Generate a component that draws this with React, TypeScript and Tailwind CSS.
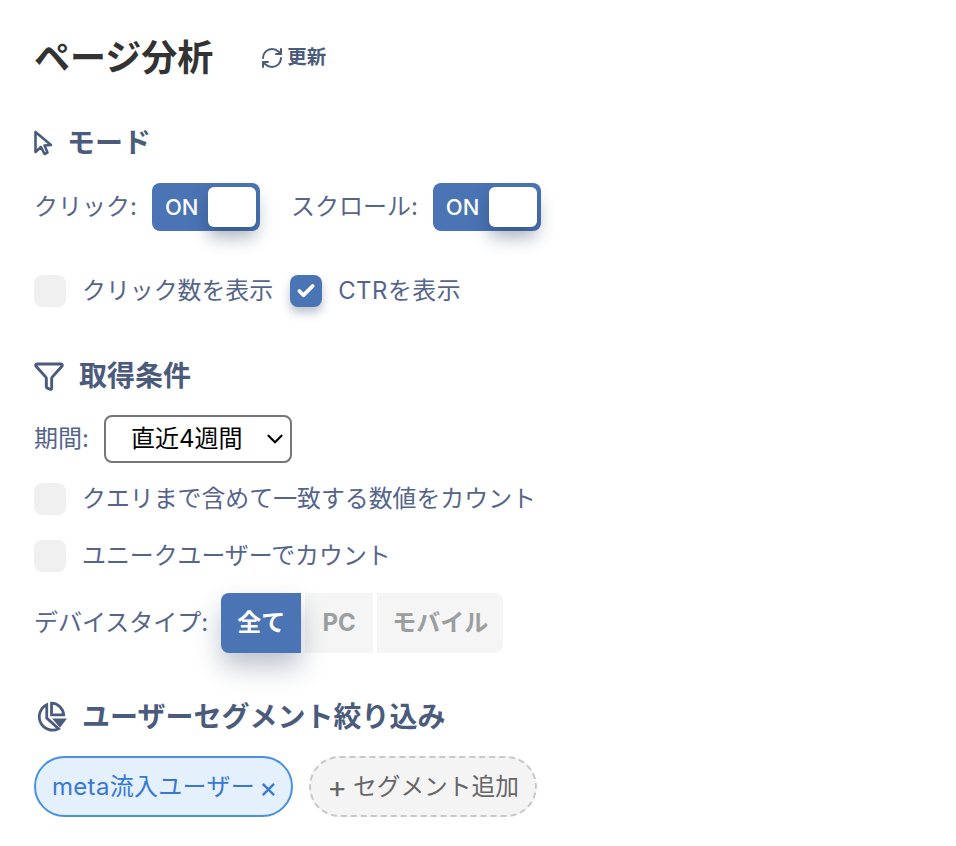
import { Check, ChevronDown, Funnel, RefreshCw } from "lucide-react";

const font = { fontFamily: 'Inter, "Noto Sans CJK JP", sans-serif' };

function CursorIcon() {
  return (
    <svg width="20" height="26" viewBox="0 0 20 26" fill="none" stroke="#4a5b7c" strokeWidth="2.6" strokeLinejoin="round">
      <path d="M1.5 2 L1.5 22 L7 17 L10.5 24 L13.5 22.5 L10.5 15.5 L17 15 Z" />
    </svg>
  );
}

function SegmentIcon() {
  return (
    <svg width="34" height="32" viewBox="0 0 32 30" fill="none" stroke="#4a5b7c" strokeWidth="2.6">
      <path d="M12 3.5 A12.5 12.5 0 1 0 23 26 L12 16 Z" />
      <path d="M16.5 2 A12 12 0 0 1 28 13 L16.5 13 Z" />
      <path d="M17 16.5 L31 16.5 L24.5 25 Z" fill="#4a5b7c" stroke="none" />
    </svg>
  );
}

function Toggle() {
  return (
    <div className="flex h-12 w-[108px] items-center justify-between rounded-lg bg-[#4a74b4] pr-[4px] pl-[13px]">
      <span className="text-[22px] font-medium text-white">ON</span>
      <div className="h-10 w-12 rounded-md bg-white shadow-[0_10px_18px_rgba(30,50,80,0.38)]" />
    </div>
  );
}

function CheckRow({ label, checked }: { label: string; checked?: boolean }) {
  return (
    <div className="flex items-center gap-4">
      {checked ? (
        <div className="flex h-8 w-8 items-center justify-center rounded-lg bg-[#4a74b4] shadow-[0_6px_10px_rgba(40,60,90,0.3)]">
          <Check size={20} strokeWidth={4.5} className="text-white" />
        </div>
      ) : (
        <div className="h-8 w-8 rounded-lg bg-[#f0f0f0]" />
      )}
      <span className={`${checked ? "tracking-[0.5px]" : ""} text-[23.9px] leading-8 text-[#55658a]`}>{label}</span>
    </div>
  );
}

export default function App() {
  return (
    <div style={font} className="min-h-[846px] bg-white pt-[37px] pl-[34px] text-[#55658a]">
      <div className="flex h-[42px] items-center gap-[47px]">
        <h1 className="text-[36px] font-bold text-[#333333]">ページ分析</h1>
        <button className="flex items-center gap-[3px] text-[19.5px] font-bold text-[#4a5b7c]">
          <RefreshCw size={24} strokeWidth={2} />
          更新
        </button>
      </div>

      <h2 className="mt-[45px] flex h-[38px] items-center gap-[13px] text-[28px] font-bold text-[#4a5b7c]">
        <CursorIcon />
        モード
      </h2>
      <div className="mt-[21px] flex items-center">
        <span className="mr-[15px] text-[24px]">クリック:</span>
        <Toggle />
        <span className="mr-[15px] ml-[31px] text-[24px]">スクロール:</span>
        <Toggle />
      </div>
      <div className="mt-[44px] flex gap-[17px]">
        <CheckRow label="クリック数を表示" />
        <CheckRow label="CTRを表示" checked />
      </div>

      <h2 className="mt-[50px] -ml-[1px] flex h-[38px] items-center gap-[14px] text-[28px] font-bold text-[#4a5b7c]">
        <Funnel size={32} strokeWidth={2.2} />
        取得条件
      </h2>
      <div className="mt-[20px] flex items-center gap-[15px]">
        <span className="text-[24px]">期間:</span>
        <div className="flex h-12 w-[188px] items-center rounded-lg border-2 border-[#767676] pr-[2px] pl-[25px] text-black">
          <span className="flex-1 text-[24px]">直近4週間</span>
          <ChevronDown size={26} strokeWidth={2} />
        </div>
      </div>
      <div className="mt-[20px]">
        <CheckRow label="クエリまで含めて一致する数値をカウント" />
      </div>
      <div className="mt-[25px]">
        <CheckRow label="ユニークユーザーでカウント" />
      </div>

      <div className="mt-[21px] flex items-center">
        <span className="mr-[13px] text-[24px]">デバイスタイプ:</span>
        <div className="flex h-[60px] gap-[4px] text-[24px] font-bold">
          <div className="z-10 flex w-[80px] items-center justify-center rounded-l-lg bg-[#4a74b4] text-white shadow-[0_14px_26px_rgba(40,60,90,0.3)]">全て</div>
          <div className="flex w-[68px] items-center justify-center bg-[#f5f5f5] text-[#9a9e9e]">PC</div>
          <div className="flex w-[126px] items-center justify-center rounded-r-lg bg-[#f5f5f5] text-[#9a9e9e]">モバイル</div>
        </div>
      </div>

      <h2 className="mt-[45px] flex h-[38px] items-center gap-[14px] text-[28px] font-bold text-[#4a5b7c]">
        <SegmentIcon />
        ユーザーセグメント絞り込み
      </h2>
      <div className="mt-[20px] flex gap-[16px]">
        <div className="flex h-[61px] w-[259px] items-center gap-[4px] rounded-full border-2 border-[#4a90e2] bg-[#e4f1fc] pl-[16px] text-[24px] tracking-[0.3px] text-[#3a78d0]">
          meta流入ユーザー
          <span className="text-[28px] leading-none">×</span>
        </div>
        <div className="flex h-[61px] w-[228px] items-center justify-center gap-[6px] rounded-full border-2 border-dashed border-[#c8c8c8] bg-[#f4f4f4] text-[23.7px] text-[#666666]">
          <span className="text-[30px] leading-none">+</span>
          セグメント追加
        </div>
      </div>
    </div>
  );
}
